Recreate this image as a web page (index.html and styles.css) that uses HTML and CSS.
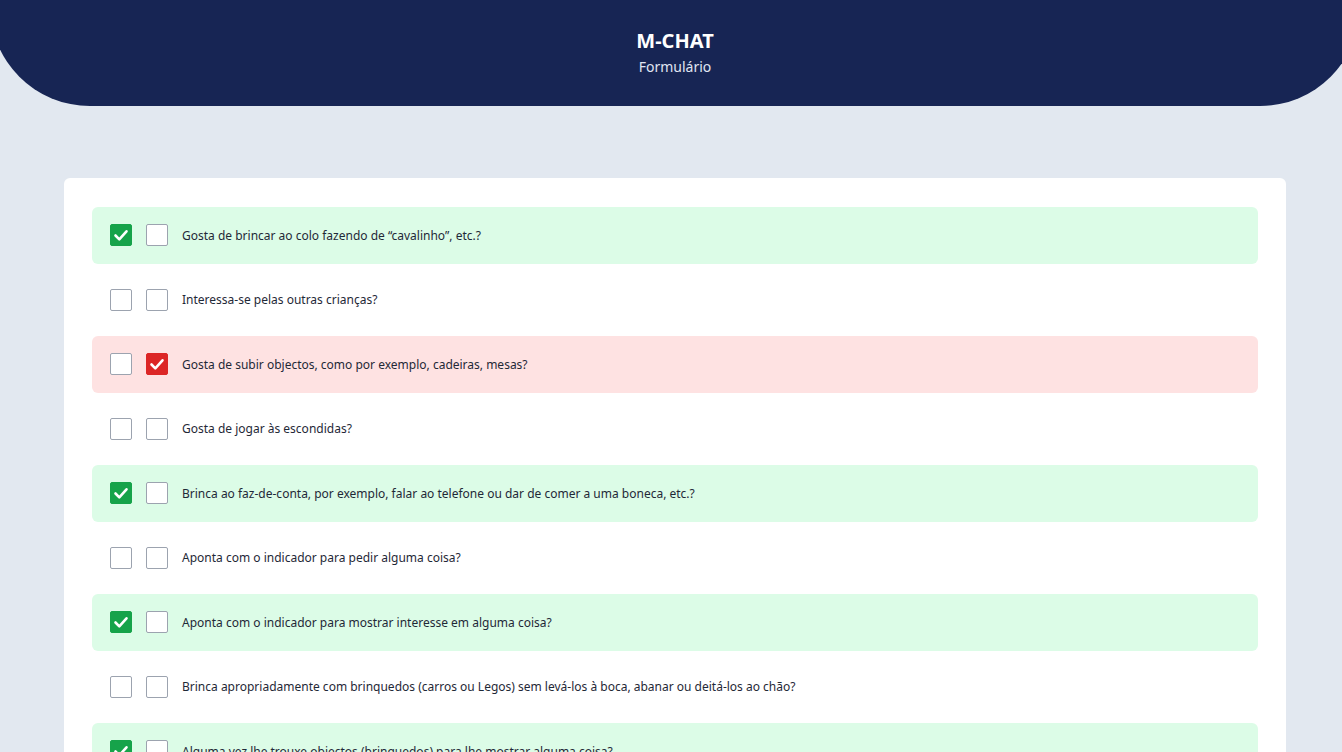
FILE: index.html
```html
<!DOCTYPE html>
<html lang="pt">
<head>
<meta charset="utf-8">
<title>M-CHAT</title>
<link rel="stylesheet" href="styles.css">
</head>
<body>
<header class="hero">
  <h1 class="hero-title">M-CHAT</h1>
  <p class="hero-sub">Formulário</p>
</header>
<main class="card">
  <div class="row row-yes"><span class="box box-yes"><svg viewBox="0 0 22 22"><path d="M5.5 11.5l3.8 3.8 7.2-8" /></svg></span><span class="box"></span><span class="q">Gosta de brincar ao colo fazendo de “cavalinho”, etc.?</span></div>
  <div class="row"><span class="box"></span><span class="box"></span><span class="q">Interessa-se pelas outras crianças?</span></div>
  <div class="row row-no"><span class="box"></span><span class="box box-no"><svg viewBox="0 0 22 22"><path d="M5.5 11.5l3.8 3.8 7.2-8" /></svg></span><span class="q">Gosta de subir objectos, como por exemplo, cadeiras, mesas?</span></div>
  <div class="row"><span class="box"></span><span class="box"></span><span class="q">Gosta de jogar às escondidas?</span></div>
  <div class="row row-yes"><span class="box box-yes"><svg viewBox="0 0 22 22"><path d="M5.5 11.5l3.8 3.8 7.2-8" /></svg></span><span class="box"></span><span class="q">Brinca ao faz-de-conta, por exemplo, falar ao telefone ou dar de comer a uma boneca, etc.?</span></div>
  <div class="row"><span class="box"></span><span class="box"></span><span class="q">Aponta com o indicador para pedir alguma coisa?</span></div>
  <div class="row row-yes"><span class="box box-yes"><svg viewBox="0 0 22 22"><path d="M5.5 11.5l3.8 3.8 7.2-8" /></svg></span><span class="box"></span><span class="q">Aponta com o indicador para mostrar interesse em alguma coisa?</span></div>
  <div class="row"><span class="box"></span><span class="box"></span><span class="q">Brinca apropriadamente com brinquedos (carros ou Legos) sem levá-los à boca, abanar ou deitá-los ao chão?</span></div>
  <div class="row row-yes"><span class="box box-yes"><svg viewBox="0 0 22 22"><path d="M5.5 11.5l3.8 3.8 7.2-8" /></svg></span><span class="box"></span><span class="q">Alguma vez lhe trouxe objectos (brinquedos) para lhe mostrar alguma coisa?</span></div>
  <div class="row"><span class="box"></span><span class="box"></span><span class="q">Olha para si nos olhos durante mais de um ou dois segundos?</span></div>
</main>
</body>
</html>
```
FILE: styles.css
```css
html, body {
  margin: 0;
  padding: 0;
}
body {
  background: #e2e8f0;
  font-family: "Noto Sans", "Open Sans", sans-serif;
  color: #1e293b;
  overflow: hidden;
}
.hero {
  background: #172554;
  color: #fff;
  height: 106px;
  margin: 0 -18px 0 -10px;
  border-radius: 0 0 100px 100px;
  display: flex;
  flex-direction: column;
  align-items: center;
  box-sizing: border-box;
  padding-top: 29px;
}
.hero-title {
  margin: 0;
  font-size: 20px;
  font-weight: 700;
  line-height: 24px;
}
.hero-sub {
  margin: 5px 0 0;
  font-size: 14px;
  line-height: 18px;
  color: #e0e6f2;
}
.card {
  background: #fff;
  margin: 72px 56px 0 64px;
  border-radius: 6px;
  padding: 29px 28px;
  display: flex;
  flex-direction: column;
  gap: 8px;
}
.row {
  display: flex;
  align-items: center;
  gap: 14px;
  height: 56.5px;
  padding: 0 18px;
  border-radius: 6px;
}
.row-yes { background: #dcfce7; }
.row-no { background: #fee2e2; }
.box {
  width: 20px;
  height: 20px;
  border: 1px solid #9ca3af;
  border-radius: 2px;
  background: #fff;
  flex: none;
  display: flex;
}
.box svg {
  width: 22px;
  height: 22px;
  margin: -1px;
  fill: none;
  stroke: #fff;
  stroke-width: 2.6;
  stroke-linecap: round;
  stroke-linejoin: round;
}
.box-yes { background: #16a34a; border-color: #16a34a; }
.box-no { background: #dc2626; border-color: #dc2626; }
.q {
  font-size: 12px;
  line-height: 16px;
  padding-top: 1px;
  color: #1f2937;
}
```
